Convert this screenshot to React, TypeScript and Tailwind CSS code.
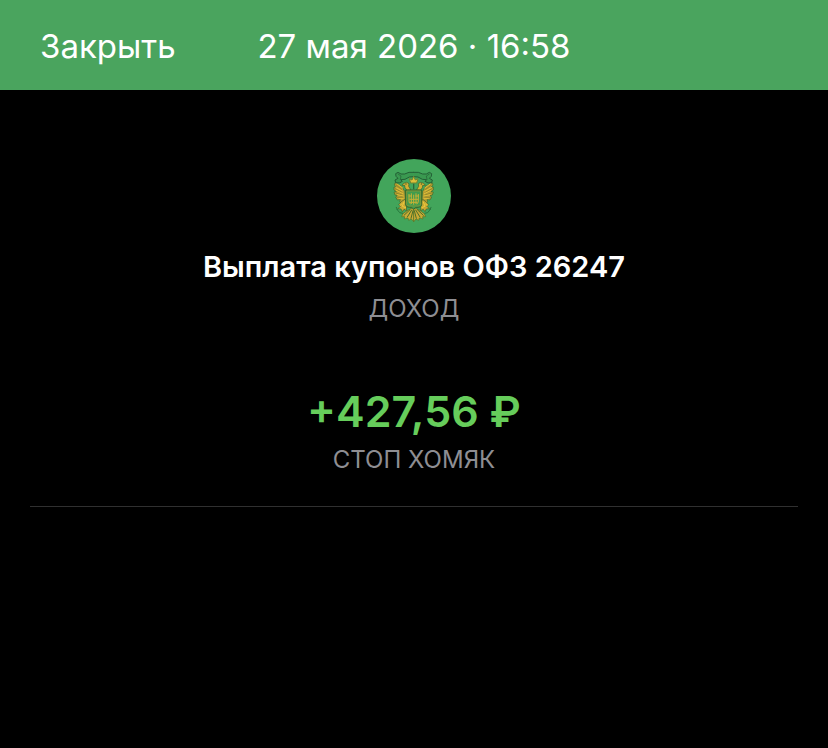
import React from 'react';

const operation = {
  date: '27 мая 2026 · 16:58',
  title: 'Выплата купонов ОФЗ 26247',
  type: 'ДОХОД',
  amount: '+427,56 ₽',
  account: 'СТОП ХОМЯК',
};

// Left half of the eagle, drawn twice (the second time mirrored)
function EagleHalf() {
  return (
    <g strokeLinejoin="round" strokeLinecap="round">
      {/* Wing */}
      <path
        d="M104 118 L95 103 L86 98 L75 92 L73 99 L79 106 L72 105 L72 114 L79 119 L72 120 L75 129 L82 131 L77 135 L82 144 L91 142 L89 149 L96 155 L106 148 Z"
        fill="#b99c30"
        stroke="#3d6a2c"
        strokeWidth="2"
      />
      <path d="M78 99 L95 112 M76 110 L95 121 M78 123 L96 129 M82 136 L98 135" stroke="#7b7a28" strokeWidth="2" fill="none" />
      <path d="M80 95 L98 108 M77 106 L97 117 M79 115 L99 125 M82 128 L100 132 M87 140 L100 140" stroke="#dfbf38" strokeWidth="3" fill="none" />
      {/* Head */}
      <path
        d="M122 113 L116 103 L117 95 L110 91 L101 94 L96 100 L104 100 L105 107 L110 114 Z"
        fill="#d4b034"
        stroke="#39602b"
        strokeWidth="2"
      />
      <circle cx="108" cy="96" r="2" fill="#39602b" />
      {/* Leg */}
      <path
        d="M103 143 L94 149 L86 158 L91 163 L84 170 L93 171 L97 179 L102 172 L110 176 L109 165 L116 160 Z"
        fill="#c9a833"
        stroke="#39602b"
        strokeWidth="2"
      />
      <path d="M102 150 L97 163 L107 167 M96 155 L91 160" stroke="#ecca3d" strokeWidth="3" fill="none" />
      <path d="M81 172 L89 182 L98 184 M79 166 L82 173" stroke="#28783e" strokeWidth="3" fill="none" />
      {/* Tail */}
      <path
        d="M128 168 L116 173 L99 185 L95 194 L104 194 L103 201 L114 198 L116 205 L124 201 L131 209 L131 169 Z"
        fill="#caaa34"
        stroke="#527329"
        strokeWidth="2"
      />
      <path d="M120 173 L102 190 M125 174 L112 195 M129 176 L123 199" stroke="#4b6e2a" strokeWidth="3" fill="none" />
      {/* Ribbon */}
      <path
        d="M131 61 L117 61 L104 66 L93 66 L84 61 L77 65 L78 73 L84 79 L75 84 L77 92 L88 93 L97 88 L92 83 L105 82 L118 75 L131 74"
        fill="#3a9950"
        stroke="#235f35"
        strokeWidth="3"
      />
      <path d="M84 66 L93 72 L91 82" stroke="#235f35" strokeWidth="2" fill="none" />
    </g>
  );
}

function Emblem() {
  return (
    <svg viewBox="21 21 222 222" className="size-[74px]" role="img" aria-label="ОФЗ">
      <circle cx="132" cy="132" r="111" fill="#42a55b" />
      <EagleHalf />
      <g transform="translate(262 0) scale(-1 1)">
        <EagleHalf />
      </g>
      {/* Crown */}
      <path
        d="M122 93 L118 80 L126 84 L131 73 L136 84 L144 80 L140 93 Z"
        fill="#dfbf3a"
        stroke="#70842d"
        strokeWidth="3"
      />
      <path d="M131 95 V112" stroke="#2b6636" strokeWidth="4" />
      {/* Shield */}
      <path
        d="M107 114 H155 V159 Q154 166 144 166 H137 L131 172 L125 166 H118 Q108 166 107 159 Z"
        fill="#409c4d"
        stroke="#35662d"
        strokeWidth="3"
      />
      <path d="M110 117 H152 V158 Q151 162 143 162 H119 Q111 162 110 158 Z" fill="none" stroke="#9c9430" strokeWidth="2" />
      <g stroke="#c7b036" strokeWidth="3" fill="none">
        <path d="M117 126 V147 Q117 154 122 156 M145 126 V147 Q145 154 140 156" />
        <path d="M124 124 V156 M131 128 V158 M138 124 V156" />
        <path d="M116 132 H126 M136 132 H147 M118 142 H144 M120 151 H142" />
      </g>
    </svg>
  );
}

export default function App() {
  return (
    <div className="flex min-h-screen flex-col bg-black font-['Inter','Liberation_Sans',sans-serif] text-white">
      {/* Header */}
      <header className="grid grid-cols-[1fr_auto_1fr] items-center bg-[#4aa45e] px-10 pt-[25px] pb-[23px] text-[33px] leading-[42px]">
        <button type="button" className="justify-self-start">
          Закрыть
        </button>
        <time dateTime="2026-05-27T16:58">{operation.date}</time>
      </header>

      <main className="px-[30px]">
        <section className="flex flex-col items-center border-b border-[#303030] pt-[69px] pb-7 text-center">
          <Emblem />
          <h1 className="mt-4 text-[29px] leading-9 font-semibold">{operation.title}</h1>
          <p className="mt-[6px] text-[24px] leading-9 text-[#8e8e93]">{operation.type}</p>
          <p className="mt-14 text-[43px] leading-[56px] font-semibold text-[#66cd5b]">{operation.amount}</p>
          <p className="mt-[3px] text-[24px] leading-9 text-[#8e8e93]">{operation.account}</p>
        </section>
      </main>
    </div>
  );
}
